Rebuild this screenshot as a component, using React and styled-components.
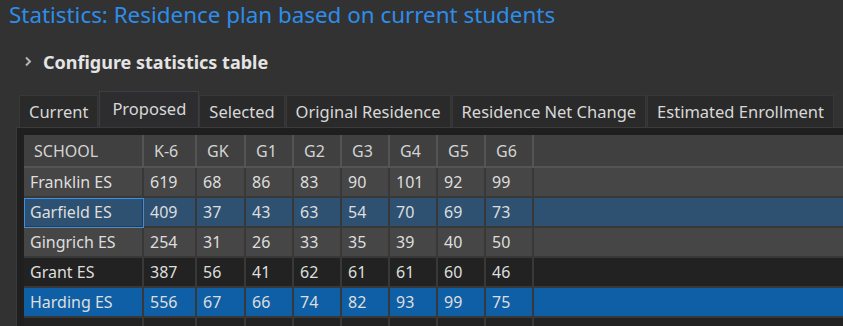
import React from "react";
import styled, { createGlobalStyle } from "styled-components";

const GlobalStyle = createGlobalStyle`
  html, body {
    margin: 0;
    padding: 0;
    background: #323232;
    overflow: hidden;
  }
  body {
    font-family: "Noto Sans", "Open Sans", sans-serif;
    color: #dedede;
  }
`;

const Page = styled.div`
  width: 843px;
  height: 326px;
  overflow: hidden;
  background: #323232;
`;

const Title = styled.h1`
  margin: 0;
  padding: 0 0 0 9px;
  height: 34px;
  font-size: 22.4px;
  font-weight: 400;
  line-height: 30px;
  color: #2d8deb;
  white-space: nowrap;
`;

const Expander = styled.div`
  display: flex;
  align-items: center;
  gap: 11px;
  height: 55px;
  padding-left: 24px;
  font-size: 18px;
  font-weight: 700;
  color: #e4e4e4;
`;

const TabStrip = styled.div`
  display: flex;
  align-items: flex-end;
  height: 38px;
  padding-left: 19px;
`;

const Tab = styled.div`
  box-sizing: border-box;
  height: ${(p) => (p.active ? "36px" : "32px")};
  padding: ${(p) => (p.active ? "0 12px 2px" : "0 9px")};
  margin-right: ${(p) => (p.active ? "0" : "1px")};
  display: flex;
  align-items: center;
  font-size: 16.5px;
  white-space: nowrap;
  color: #d8d8d8;
  background: ${(p) => (p.active ? "#2d2d30" : "#2a2a2a")};
  border: 1px solid ${(p) => (p.active ? "#3e3e42" : "#383838")};
  border-bottom: none;
`;

const Panel = styled.div`
  margin-left: 16px;
  border-left: 1px solid #3a3a3a;
  border-top: 1px solid #3a3a3a;
  background: #1f1f1f;
  padding: 7px 0 0 7px;
`;

const Row = styled.div`
  display: grid;
  grid-template-columns: 120px 53px 49px repeat(6, 48px) 1fr;
  height: ${(p) => (p.head ? "33px" : "30px")};
  background: ${(p) => p.bg};
`;

const Cell = styled.div`
  box-sizing: border-box;
  display: flex;
  align-items: center;
  padding-left: ${(p) => (p.head ? "10px" : "6px")};
  font-size: 16px;
  white-space: nowrap;
  color: ${(p) => (p.head ? "#d4d4d4" : "#dedede")};
  border-right: 2px solid ${(p) => (p.head ? "#545454" : "#383838")};
  border-bottom: 2px solid ${(p) => (p.head ? "#545454" : "#383838")};
  outline: ${(p) => (p.focus ? "1px solid #3a8fe8" : "none")};
  outline-offset: -1px;

  &:last-child {
    border-right: none;
  }
`;

const Chevron = () => (
  <svg width="8" height="11" viewBox="0 0 8 11">
    <polyline points="2,1.5 6,5.5 2,9.5" fill="none" stroke="#b4b4b4" strokeWidth="2" />
  </svg>
);

const columns = ["SCHOOL", "K-6", "GK", "G1", "G2", "G3", "G4", "G5", "G6"];

const rows = [
  { name: "Franklin ES", values: [619, 68, 86, 83, 90, 101, 92, 99], bg: "#464646" },
  { name: "Garfield ES", values: [409, 37, 43, 63, 54, 70, 69, 73], bg: "#2e5172", focus: true },
  { name: "Gingrich ES", values: [254, 31, 26, 33, 35, 39, 40, 50], bg: "#464646" },
  { name: "Grant ES", values: [387, 56, 41, 62, 61, 61, 60, 46], bg: "#222222" },
  { name: "Harding ES", values: [556, 67, 66, 74, 82, 93, 99, 75], bg: "#0f5fa6" },
];

const tabs = [
  "Current",
  "Proposed",
  "Selected",
  "Original Residence",
  "Residence Net Change",
  "Estimated Enrollment",
];

export default function App() {
  return (
    <Page>
      <GlobalStyle />
      <Title>Statistics: Residence plan based on current students</Title>
      <Expander>
        <Chevron />
        <span>Configure statistics table</span>
      </Expander>
      <TabStrip>
        {tabs.map((t) => (
          <Tab key={t} active={t === "Proposed"}>
            {t}
          </Tab>
        ))}
      </TabStrip>
      <Panel>
        <Row head bg="#404040">
          {columns.map((c) => (
            <Cell head key={c}>
              {c}
            </Cell>
          ))}
          <Cell head />
        </Row>
        {rows.map((r) => (
          <Row key={r.name} bg={r.bg}>
            <Cell focus={r.focus}>{r.name}</Cell>
            {r.values.map((v, i) => (
              <Cell key={i}>{v}</Cell>
            ))}
            <Cell />
          </Row>
        ))}
        <Row bg="#222222">
          {columns.map((c) => (
            <Cell key={c} />
          ))}
          <Cell />
        </Row>
      </Panel>
    </Page>
  );
}
